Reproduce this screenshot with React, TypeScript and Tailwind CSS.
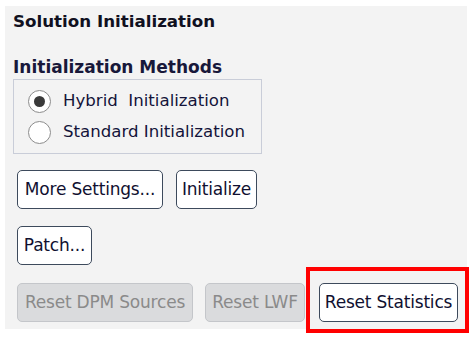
import type { ReactNode } from 'react'

const font = { fontFamily: '"DejaVu Sans", Verdana, sans-serif' }

function Btn({ children, disabled, className = '' }: { children: ReactNode; disabled?: boolean; className?: string }) {
  return (
    <button
      className={`flex h-[39px] items-center justify-center rounded-[5px] border text-[17px] leading-none tracking-[-0.2px] ${
        disabled ? 'border-[#c4c6ca] bg-[#dadbdd] text-[#8a8a8a]' : 'border-[#3d4a5c] bg-white text-[#101030]'
      } ${className}`}
    >
      {children}
    </button>
  )
}

function Radio({ checked, label }: { checked?: boolean; label: string }) {
  return (
    <div className="flex h-[31px] items-center gap-[12px]">
      <span className="flex h-[23px] w-[23px] items-center justify-center rounded-full border border-[#8c8c8c] bg-white">
        {checked && <span className="h-[11px] w-[11px] rounded-full bg-[#3a3a3a]" />}
      </span>
      <span className="whitespace-pre text-[16.6px] text-[#14143a]">{label}</span>
    </div>
  )
}

export default function App() {
  return (
    <div className="h-[337px] w-[475px] bg-white pl-[5px] pt-[6px]" style={font}>
      <div className="relative h-[323px] w-[462px] bg-[#f3f3f3] pl-[8px]">
        <h1 className="pt-[5px] text-[16.7px] font-bold leading-[20px] text-[#101020]">Solution Initialization</h1>
        <h2 className="mt-[26px] text-[17px] font-bold leading-[20px] text-[#18183a]">Initialization Methods</h2>
        <div className="mt-[2px] flex h-[75px] w-[249px] flex-col justify-center border border-[#c9cdd8] pl-[14px]">
          <Radio checked label="Hybrid  Initialization" />
          <Radio label="Standard Initialization" />
        </div>
        <div className="ml-[4px] mt-[16px] flex gap-[13px]">
          <Btn className="w-[146px]">More Settings...</Btn>
          <Btn className="w-[81px]">Initialize</Btn>
        </div>
        <div className="ml-[4px] mt-[17px] flex">
          <Btn className="w-[75px]">Patch...</Btn>
        </div>
        <div className="ml-[4px] mt-[18px] flex">
          <Btn disabled className="w-[176px]">Reset DPM Sources</Btn>
          <Btn disabled className="ml-[12px] w-[100px]">Reset LWF</Btn>
          <Btn className="ml-[14px] w-[139px]">Reset Statistics</Btn>
        </div>
        <div className="pointer-events-none absolute left-[301px] top-[261px] h-[66px] w-[163px] border-4 border-[#ff0000]" />
      </div>
    </div>
  )
}
